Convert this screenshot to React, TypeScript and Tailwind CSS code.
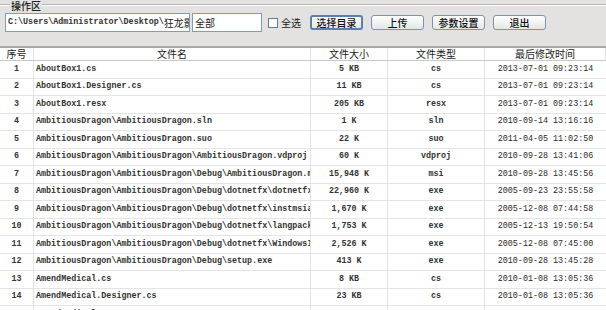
import React from 'react';

interface FileRow {
  no: number;
  name: string;
  size: string;
  type: string;
  time: string;
}

const rows: FileRow[] = [
  { no: 1, name: 'AboutBox1.cs', size: '5 KB', type: 'cs', time: '2013-07-01 09:23:14' },
  { no: 2, name: 'AboutBox1.Designer.cs', size: '11 KB', type: 'cs', time: '2013-07-01 09:23:14' },
  { no: 3, name: 'AboutBox1.resx', size: '205 KB', type: 'resx', time: '2013-07-01 09:23:14' },
  { no: 4, name: 'AmbitiousDragon\\AmbitiousDragon.sln', size: '1 K', type: 'sln', time: '2010-09-14 13:16:16' },
  { no: 5, name: 'AmbitiousDragon\\AmbitiousDragon.suo', size: '22 K', type: 'suo', time: '2011-04-05 11:02:50' },
  { no: 6, name: 'AmbitiousDragon\\AmbitiousDragon\\AmbitiousDragon.vdproj', size: '60 K', type: 'vdproj', time: '2010-09-28 13:41:06' },
  { no: 7, name: 'AmbitiousDragon\\AmbitiousDragon\\Debug\\AmbitiousDragon.msi', size: '15,948 K', type: 'msi', time: '2010-09-28 13:45:56' },
  { no: 8, name: 'AmbitiousDragon\\AmbitiousDragon\\Debug\\dotnetfx\\dotnetfx.exe', size: '22,960 K', type: 'exe', time: '2005-09-23 23:55:58' },
  { no: 9, name: 'AmbitiousDragon\\AmbitiousDragon\\Debug\\dotnetfx\\instmsia.exe', size: '1,670 K', type: 'exe', time: '2005-12-08 07:44:58' },
  { no: 10, name: 'AmbitiousDragon\\AmbitiousDragon\\Debug\\dotnetfx\\langpack.exe', size: '1,753 K', type: 'exe', time: '2005-12-13 19:50:54' },
  { no: 11, name: 'AmbitiousDragon\\AmbitiousDragon\\Debug\\dotnetfx\\WindowsInstaller.exe', size: '2,526 K', type: 'exe', time: '2005-12-08 07:45:00' },
  { no: 12, name: 'AmbitiousDragon\\AmbitiousDragon\\Debug\\setup.exe', size: '413 K', type: 'exe', time: '2010-09-28 13:45:28' },
  { no: 13, name: 'AmendMedical.cs', size: '8 KB', type: 'cs', time: '2010-01-08 13:05:36' },
  { no: 14, name: 'AmendMedical.Designer.cs', size: '23 KB', type: 'cs', time: '2010-01-08 13:05:36' },
  { no: 15, name: 'AmendMedical.resx', size: '6 KB', type: 'resx', time: '2010-01-08 13:05:36' },
];

const monoBase = "font-['Liberation_Mono','Noto_Sans_CJK_SC',monospace] text-[8.4px]";
const mono = `${monoBase} font-bold text-[#333]`;
const monoLight = `${monoBase} text-[#2a2a2a]`;
const cjk = "font-['Noto_Sans_CJK_SC',sans-serif]";

function WinButton({ label, active }: { label: string; active?: boolean }) {
  return (
    <button
      className={`h-[15px] w-[53px] rounded-[3px] bg-gradient-to-b from-white to-[#e6e6e6] ${cjk} text-[10px] leading-none font-medium text-[#111] ${
        active ? 'border-2 border-[#5b7fb5]' : 'border border-[#7a94b8]'
      }`}
    >
      {label}
    </button>
  );
}

export default function App() {
  return (
    <div className="w-[606px] h-[310px] overflow-hidden bg-white">
      {/* operation panel */}
      <div className="h-[48px] bg-[#e3e2e0] border-b-2 border-[#a9a8a6] relative">
        <div className="absolute left-0 right-0 top-[4px] border-t border-[#b5b4b2] border-b border-b-white" />
        <span className={`absolute left-[10px] top-0 px-[1px] bg-[#e3e2e0] ${cjk} text-[10px] leading-[11px] font-medium text-[#222]`}>
          操作区
        </span>
        <div className="flex items-center pt-[13px] pl-[5px]">
          <div className="w-[185px] h-[19px] bg-white border border-[#7f9db9] overflow-hidden whitespace-nowrap flex items-center pl-[2px]">
            <span className={mono}>C:\Users\Administrator\Desktop\</span>
            <span className={`${cjk} text-[10px] text-[#1a1a1a]`}>狂龙影</span>
          </div>
          <div className="ml-[2px] w-[70px] h-[19px] bg-white border border-[#7f9db9] flex items-center pl-[2px]">
            <span className={`${cjk} text-[10px] text-[#1a1a1a]`}>全部</span>
          </div>
          <div className="ml-[6px] w-[10px] h-[10px] bg-white border border-[#5a7ca8]" />
          <span className={`ml-[3px] ${cjk} text-[10px] text-[#1a1a1a]`}>全选</span>
          <div className="ml-[9px] flex items-center gap-[8px]">
            <WinButton label="选择目录" active />
            <WinButton label="上传" />
            <WinButton label="参数设置" />
            <WinButton label="退出" />
          </div>
        </div>
      </div>

      {/* list */}
      <div className="grid grid-cols-[34px_277px_77px_97px_1fr] h-[13px] border-b border-[#c8c8c8]">
        {['序号', '文件名', '文件大小', '文件类型', '最后修改时间'].map((h) => (
          <div
            key={h}
            className={`flex items-center justify-center border-r border-[#e2e2e2] ${cjk} text-[10px] leading-none text-[#1a1a1a]`}
          >
            {h}
          </div>
        ))}
      </div>
      {rows.map((r) => (
        <div key={r.no} className="grid grid-cols-[34px_277px_77px_97px_1fr] h-[17.5px] border-b border-[#e4e4e4]">
          <div className={`flex items-center justify-center border-r border-[#e2e2e2] ${mono}`}>{r.no}</div>
          <div className={`flex items-center pl-[2px] border-r border-[#e2e2e2] overflow-hidden whitespace-nowrap ${mono}`}>
            {r.name}
          </div>
          <div className={`flex items-center justify-center border-r border-[#e2e2e2] ${mono}`}>{r.size}</div>
          <div className={`flex items-center justify-center border-r border-[#e2e2e2] ${mono}`}>{r.type}</div>
          <div className={`flex items-center justify-center ${monoLight}`}>{r.time}</div>
        </div>
      ))}
    </div>
  );
}
